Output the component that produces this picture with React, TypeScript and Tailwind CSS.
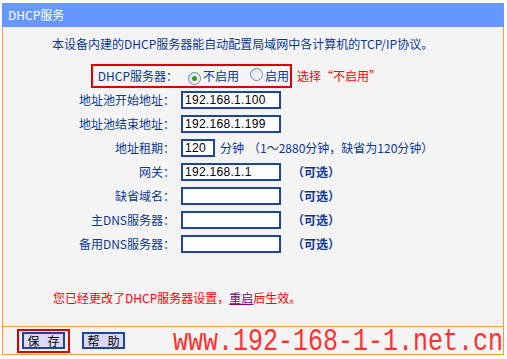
import React from "react";

const cjk = { fontFamily: '"Noto Sans CJK SC", "Liberation Sans", sans-serif' };

const Radio: React.FC<{ checked?: boolean }> = ({ checked }) => (
  <span className="inline-flex h-[13px] w-[13px] shrink-0 items-center justify-center rounded-full border border-[#6f86a6] bg-gradient-to-br from-[#d9dfe7] to-white">
    {checked && <span className="h-[5px] w-[5px] rounded-full bg-[#25a325]" />}
  </span>
);

const Row: React.FC<{ label: string; children?: React.ReactNode }> = ({ label, children }) => (
  <div className="flex h-6 items-center">
    <div className="w-[172px] whitespace-nowrap text-right">{label}</div>
    <div className="ml-[6px] flex items-center">{children}</div>
  </div>
);

const Field: React.FC<{ value?: string; w?: "short" | "long" }> = ({ value = "", w = "long" }) => (
  <div
    className={
      (w === "short" ? "w-[34px] " : "w-[100px] ") +
      "flex h-[18px] items-center border-2 border-[#1d43a3] bg-white pl-[2px] text-[12px] tracking-[0.3px] text-black"
    }
    style={{ fontFamily: '"Liberation Sans", sans-serif' }}
  >
    {value}
  </div>
);

const Optional = () => <span className="ml-[11px] font-bold">（可选）</span>;

const Button: React.FC<{ a: string; b: string }> = ({ a, b }) => (
  <div className="flex h-[17px] w-[43px] items-center justify-center gap-2 border-2 border-[#1d43a3] bg-[#dadaf8] text-[12px] leading-none text-black">
    <span>{a}</span>
    <span>{b}</span>
  </div>
);

const App: React.FC = () => {
  const site = "www.192-168-1-1.net.cn";
  return (
    <div className="min-h-screen bg-white pl-[2px] pt-[3px] text-[12px]" style={cjk}>
      <div className="w-[502px]">
        {/* title bar */}
        <div className="flex h-6 items-center bg-[#6699ff] pl-[6px] text-white">DHCP服务</div>

        {/* body */}
        <div className="flex h-[299px] flex-col border-x border-[#f99d3a] bg-[#f4f4f4] pt-[5px] text-[#0c3797]">
          <div className="flex h-6 items-center whitespace-nowrap pl-[49px]">
            本设备内建的DHCP服务器能自动配置局域网中各计算机的TCP/IP协议。
          </div>

          <div className="mt-2 flex h-6 items-center">
            <div className="ml-[88px] flex h-6 items-center border-2 border-[#e00000]">
              <div className="w-[85px] whitespace-nowrap text-right">DHCP服务器：</div>
              <span className="ml-[10px]">
                <Radio checked />
              </span>
              <span className="ml-[2px]">不启用</span>
              <span className="ml-[11px]">
                <Radio />
              </span>
              <span className="ml-[2px] pr-[1px]">启用</span>
            </div>
            <span className="ml-[5px] text-[#ff0000]">选择“不启用”</span>
          </div>

          <Row label="地址池开始地址：">
            <Field value="192.168.1.100" />
          </Row>
          <Row label="地址池结束地址：">
            <Field value="192.168.1.199" />
          </Row>
          <Row label="地址租期：">
            <Field value="120" w="short" />
            <span className="ml-[5px]">分钟</span>
            <span className="ml-[4px]">（1～2880分钟，缺省为120分钟）</span>
          </Row>
          <Row label="网关：">
            <Field value="192.168.1.1" />
            <Optional />
          </Row>
          <Row label="缺省域名：">
            <Field />
            <Optional />
          </Row>
          <Row label="主DNS服务器：">
            <Field />
            <Optional />
          </Row>
          <Row label="备用DNS服务器：">
            <Field />
            <Optional />
          </Row>

          <div className="mt-[30px] flex h-6 items-center pl-[50px] text-[#ff0000]">
            您已经更改了DHCP服务器设置，
            <span className="text-[#800080] underline">重启</span>
            后生效。
          </div>
        </div>

        {/* footer */}
        <div className="flex h-[29px] items-center border border-[#f99d3a] bg-[#f4f4f4]">
          <div className="ml-[14px] flex h-6 w-[53px] shrink-0 items-center justify-center border-2 border-[#e00000]">
            <Button a="保" b="存" />
          </div>
          <div className="ml-[12px] shrink-0">
            <Button a="帮" b="助" />
          </div>
          <div
            className="ml-[48px] shrink-0 translate-y-[1px] scale-y-125 whitespace-nowrap text-[25px] leading-none text-[#ff3030]"
            style={{ fontFamily: '"Liberation Mono", monospace' }}
          >
            {site}
          </div>
        </div>
      </div>
    </div>
  );
};

export default App;
